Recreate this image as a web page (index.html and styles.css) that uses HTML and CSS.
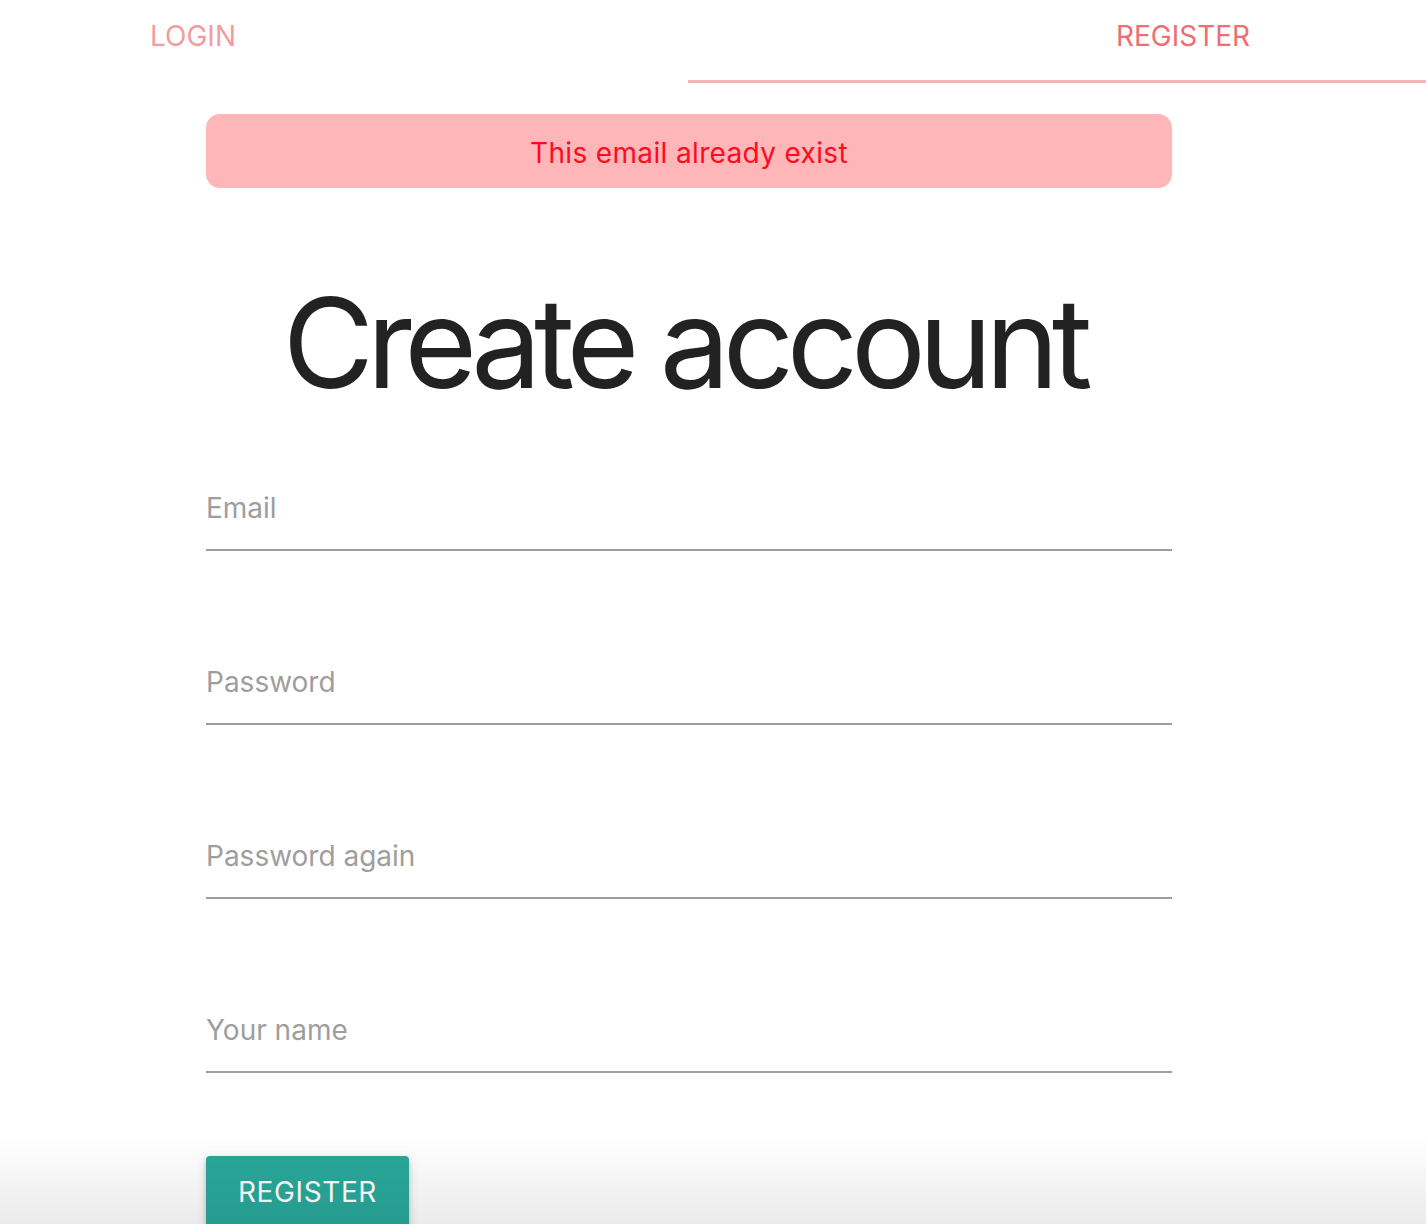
FILE: index.html
```html
<!DOCTYPE html>
<html lang="en">
<head>
<meta charset="utf-8">
<title>Create account</title>
<link rel="stylesheet" href="styles.css">
</head>
<body>
<nav class="tabs-wrap">
  <ul class="tabs">
    <li class="tab"><a href="#">LOGIN</a></li>
    <li class="tab active"><a href="#">REGISTER</a></li>
  </ul>
</nav>
<main class="container">
  <div class="alert">This email already exist</div>
  <h1 class="title">Create account</h1>
  <form class="form">
    <div class="field"><input type="email" placeholder="Email"></div>
    <div class="field"><input type="password" placeholder="Password"></div>
    <div class="field"><input type="password" placeholder="Password again"></div>
    <div class="field"><input type="text" placeholder="Your name"></div>
    <div class="actions"><button type="button" class="btn">REGISTER</button></div>
  </form>
</main>
<div class="fade"></div>
</body>
</html>
```
FILE: styles.css
```css
html, body {
  margin: 0;
  padding: 0;
  background: #fff;
  overflow-x: hidden;
}
body {
  font-family: Inter, "Noto Sans", sans-serif;
  color: #222;
}
.tabs-wrap {
  overflow: hidden;
}
.tabs {
  list-style: none;
  margin: 0 0 0 -302px;
  padding: 0;
  width: 1980px;
  display: flex;
}
.tab {
  flex: 1;
  height: 72px;
  padding-bottom: 8px;
  border-bottom: 3px solid transparent;
  display: flex;
  align-items: center;
  justify-content: center;
}
.tab a {
  font-size: 28px;
  text-decoration: none;
  color: rgba(238, 110, 115, 0.7);
}
.tab.active {
  border-bottom-color: #f6b2b5;
}
.tab.active a {
  color: #ee6e73;
}
.container {
  margin-left: 206px;
  width: 966px;
}
.alert {
  margin-top: 31px;
  height: 74px;
  line-height: 78px;
  border-radius: 14px;
  background: #ffb6b9;
  color: #ff0a1e;
  font-size: 28px;
  letter-spacing: 0.35px;
  text-align: center;
}
.title {
  margin: 92px 0 0;
  font-size: 125px;
  line-height: 125px;
  font-weight: 400;
  text-align: center;
  color: #222;
  letter-spacing: -7.3px;
  text-indent: -10px;
}
.form {
  margin-top: 62px;
  display: flex;
  flex-direction: column;
  gap: 90px;
}
.field input {
  display: block;
  box-sizing: content-box;
  width: 100%;
  height: 82px;
  padding: 0;
  margin: 0;
  border: none;
  border-bottom: 2px solid #9e9e9e;
  outline: none;
  background: transparent;
  font-family: Inter, "Noto Sans", sans-serif;
  font-size: 28px;
  color: #222;
}
.field input::placeholder {
  color: #9e9e9e;
  opacity: 1;
}
.actions {
  margin-top: -7px;
}
.btn {
  height: 72px;
  padding: 0 32px;
  border: none;
  border-radius: 4px;
  background: #2aa99c;
  color: #fff;
  font-family: Inter, "Noto Sans", sans-serif;
  font-size: 28px;
  letter-spacing: 0.6px;
  box-shadow: 0 4px 10px rgba(0, 0, 0, 0.18), 0 2px 4px rgba(0, 0, 0, 0.12);
}
.fade {
  position: fixed;
  left: 0;
  right: 0;
  bottom: 0;
  height: 90px;
  background: linear-gradient(to bottom, rgba(0, 0, 0, 0), rgba(0, 0, 0, 0.08));
  pointer-events: none;
}
```
